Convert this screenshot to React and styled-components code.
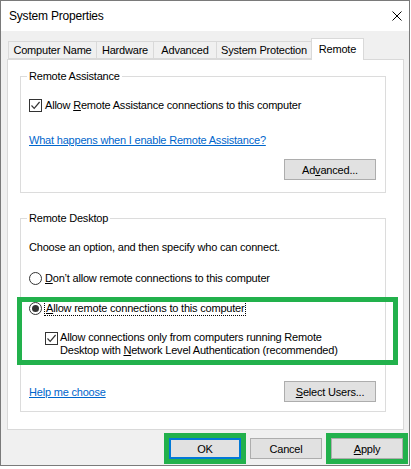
import React from "react";
import styled, { createGlobalStyle } from "styled-components";

const GlobalStyle = createGlobalStyle`
  html, body {
    margin: 0;
    padding: 0;
    background: #ffffff;
  }
  body {
    font-family: "Liberation Sans", Arial, sans-serif;
    font-size: 11px;
    letter-spacing: -0.2px;
    color: #000;
  }
`;

const Window = styled.div`
  width: 410px;
  height: 466px;
  box-sizing: border-box;
  border: 1px solid #7a7a7a;
  display: flex;
  flex-direction: column;
  background: #f0f0f0;
`;

const TitleBar = styled.div`
  height: 30px;
  flex: none;
  background: #fff;
  display: flex;
  align-items: center;
  justify-content: space-between;
  padding: 0 7px 0 8px;
`;

const Title = styled.span`
  font-size: 12px;
`;

const Client = styled.div`
  flex: 1;
  display: flex;
  flex-direction: column;
  padding: 7px 5px 6px 6px;
`;

const TabStrip = styled.div`
  display: flex;
  align-items: flex-end;
  height: 21px;
  padding-left: 1px;
  position: relative;
  z-index: 1;
`;

const Tab = styled.div`
  width: ${(p) => p.$w}px;
  height: ${(p) => (p.$active ? 22 : 18)}px;
  box-sizing: border-box;
  margin-left: ${(p) => (p.$first ? 0 : -1)}px;
  margin-bottom: ${(p) => (p.$active ? -1 : 0)}px;
  border: 1px solid #d9d9d9;
  border-bottom: ${(p) => (p.$active ? "none" : "1px solid #d9d9d9")};
  background: ${(p) => (p.$active ? "#fff" : "#f0f0f0")};
  display: flex;
  align-items: center;
  justify-content: center;
  padding-bottom: ${(p) => (p.$active ? 2 : 0)}px;
  white-space: nowrap;
`;

const Panel = styled.div`
  height: 371px;
  box-sizing: border-box;
  border: 1px solid #d9d9d9;
  background: #fff;
  padding: 9px 17px 0 12px;
  position: relative;
`;

const Group = styled.fieldset`
  margin: ${(p) => p.$top}px 0 0 0;
  padding: 14px 9px ${(p) => p.$bottom}px 8px;
  border: 1px solid #dcdcdc;
  min-width: 0;
`;

const Legend = styled.legend`
  padding: 0 2px;
  margin-left: -2px;
  line-height: 14px;
`;

const Row = styled.div`
  display: flex;
  align-items: center;
  min-height: 16px;
  margin-top: ${(p) => p.$mt || 0}px;
  justify-content: ${(p) => p.$justify || "flex-start"};
`;

const Text = styled.span`
  line-height: 16px;
  white-space: nowrap;
`;

const Link = styled.span`
  color: #0066cc;
  text-decoration: underline;
  line-height: 16px;
`;

const Box = styled.span`
  width: 13px;
  height: 13px;
  box-sizing: border-box;
  border: 1px solid #333;
  background: #fff;
  flex: none;
  margin-right: ${(p) => p.$gap}px;
  display: flex;
  align-items: center;
  justify-content: center;
`;

const Radio = styled(Box)`
  border-radius: 50%;
`;

const Dot = styled.span`
  width: 7px;
  height: 7px;
  border-radius: 50%;
  background: #333;
`;

const Focus = styled.span`
  outline: 1px dotted #000;
  outline-offset: 0;
  line-height: 13px;
  padding: 0 1px;
`;

const Nested = styled.div`
  display: flex;
  align-items: flex-start;
  padding-left: 16px;
  margin-top: ${(p) => p.$mt}px;
  line-height: 13px;
`;

const NestedBox = styled(Box)`
  margin-top: 1px;
`;

const Button = styled.button`
  width: ${(p) => p.$w}px;
  height: 21px;
  box-sizing: border-box;
  padding: 0;
  background: #e1e1e1;
  border: 1px solid ${(p) => (p.$default ? "#0078d7" : "#adadad")};
  box-shadow: ${(p) => (p.$default ? "inset 0 0 0 1px #0078d7" : "none")};
  font-family: inherit;
  font-size: 11px;
  letter-spacing: -0.2px;
  color: #000;
  outline: ${(p) => (p.$mark ? "5px solid #22b14c" : "none")};
  outline-offset: 0;
`;

const Footer = styled.div`
  display: flex;
  justify-content: flex-end;
  gap: 9px;
  margin-top: 8px;
  padding-right: 1px;
`;

const Highlight = styled.div`
  position: absolute;
  left: 9px;
  top: 237px;
  width: 381px;
  height: 68px;
  box-sizing: border-box;
  border: 5px solid #22b14c;
  pointer-events: none;
`;

const Check = () => (
  <svg width="11" height="11" viewBox="0 0 11 11">
    <path d="M1.5 5.5 L4.2 8.3 L9.6 2" fill="none" stroke="#333" strokeWidth="1.2" />
  </svg>
);

const CloseIcon = () => (
  <svg width="10" height="10" viewBox="0 0 10 10">
    <path d="M0.5 0.5 L9.5 9.5 M9.5 0.5 L0.5 9.5" stroke="#000" strokeWidth="1" />
  </svg>
);

const tabs = [
  { name: "Computer Name", w: 89 },
  { name: "Hardware", w: 58 },
  { name: "Advanced", w: 64 },
  { name: "System Protection", w: 96 },
  { name: "Remote", w: 53, active: true },
];

export default function App() {
  return (
    <>
      <GlobalStyle />
      <Window>
        <TitleBar>
          <Title>System Properties</Title>
          <CloseIcon />
        </TitleBar>
        <Client>
          <TabStrip>
            {tabs.map((t, i) => (
              <Tab key={t.name} $w={t.w} $active={t.active} $first={i === 0}>
                {t.name}
              </Tab>
            ))}
          </TabStrip>
          <Panel>
            <Group $top={0} $bottom={12}>
              <Legend>Remote Assistance</Legend>
              <Row>
                <Box $gap={3}>
                  <Check />
                </Box>
                <Text>
                  Allow <u>R</u>emote Assistance connections to this computer
                </Text>
              </Row>
              <Row $mt={19}>
                <Link>What happens when I enable Remote Assistance?</Link>
              </Row>
              <Row $mt={11} $justify="flex-end">
                <Button $w={92}>
                  Ad<u>v</u>anced...
                </Button>
              </Row>
            </Group>
            <Group $top={18} $bottom={9}>
              <Legend>Remote Desktop</Legend>
              <Row>
                <Text>Choose an option, and then specify who can connect.</Text>
              </Row>
              <Row $mt={15}>
                <Radio $gap={3} />
                <Text>
                  <u>D</u>on’t allow remote connections to this computer
                </Text>
              </Row>
              <Row $mt={14}>
                <Radio $gap={3}>
                  <Dot />
                </Radio>
                <Focus>
                  <u>A</u>llow remote connections to this computer
                </Focus>
              </Row>
              <Nested $mt={15}>
                <NestedBox $gap={2}>
                  <Check />
                </NestedBox>
                <span>
                  Allow connections only from computers running Remote
                  <br />
                  Desktop with <u>N</u>etwork Level Authentication (recommended)
                </span>
              </Nested>
              <Row $mt={24} $justify="space-between">
                <Link>Help me choose</Link>
                <Button $w={92}>
                  <u>S</u>elect Users...
                </Button>
              </Row>
            </Group>
            <Highlight />
          </Panel>
          <Footer>
            <Button $w={72} $default $mark>
              OK
            </Button>
            <Button $w={72}>Cancel</Button>
            <Button $w={72} $mark>
              <u>A</u>pply
            </Button>
          </Footer>
        </Client>
      </Window>
    </>
  );
}
